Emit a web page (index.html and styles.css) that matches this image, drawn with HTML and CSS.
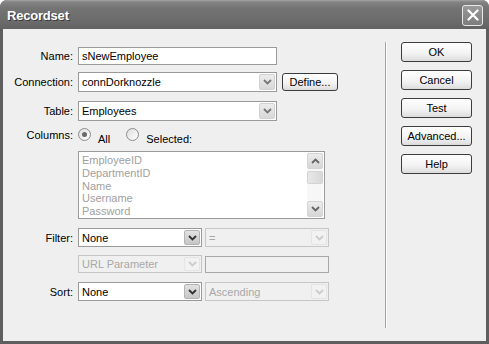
FILE: index.html
```html
<!DOCTYPE html>
<html lang="en">
<head>
    <meta charset="UTF-8">
    <title>Recordset</title>
    <link rel="stylesheet" href="styles.css">
</head>
<body>

    <div class="window">
        <div class="titlebar">
            <span class="title">Recordset</span>
            <div class="close-btn">
                <svg width="12" height="12" viewBox="0 0 12 12"><path d="M1.5 1.5 L10.5 10.5 M10.5 1.5 L1.5 10.5" stroke="#fff" stroke-width="2.2" stroke-linecap="round"/></svg>
            </div>
        </div>

        <div class="client">
            <div class="fields">
                <div class="row row-name">
                    <span class="label">Name:</span>
                    <div class="textbox w-wide">sNewEmployee</div>
                </div>

                <div class="row row-conn">
                    <span class="label">Connection:</span>
                    <div class="select w-wide"><span class="value">connDorknozzle</span><span class="arrow light"><svg width="9" height="6" viewBox="0 0 9 6"><path d="M1 1 L4.5 4.5 L8 1" fill="none" stroke="#777" stroke-width="1.8"/></svg></span></div>
                    <div class="btn btn-define">Define...</div>
                </div>

                <div class="row row-table">
                    <span class="label">Table:</span>
                    <div class="select w-wide"><span class="value">Employees</span><span class="arrow light"><svg width="9" height="6" viewBox="0 0 9 6"><path d="M1 1 L4.5 4.5 L8 1" fill="none" stroke="#777" stroke-width="1.8"/></svg></span></div>
                </div>

                <div class="row row-cols">
                    <span class="label">Columns:</span>
                    <div class="radios">
                        <span class="radio checked"></span><span class="radio-text">All</span>
                        <span class="radio second"></span><span class="radio-text">Selected:</span>
                    </div>
                </div>

                <div class="row row-list">
                    <span class="label"></span>
                    <div class="listbox">
                        <div class="items">
                            <div>EmployeeID</div>
                            <div>DepartmentID</div>
                            <div>Name</div>
                            <div>Username</div>
                            <div>Password</div>
                        </div>
                        <div class="scrollbar">
                            <span class="sb-btn"><svg width="9" height="6" viewBox="0 0 9 6"><path d="M1 5 L4.5 1.5 L8 5" fill="none" stroke="#666" stroke-width="1.8"/></svg></span>
                            <span class="sb-thumb"></span>
                            <span class="sb-track"></span>
                            <span class="sb-btn"><svg width="9" height="6" viewBox="0 0 9 6"><path d="M1 1 L4.5 4.5 L8 1" fill="none" stroke="#666" stroke-width="1.8"/></svg></span>
                        </div>
                    </div>
                </div>

                <div class="row row-filter">
                    <span class="label">Filter:</span>
                    <div class="select w-half"><span class="value">None</span><span class="arrow"><svg width="9" height="6" viewBox="0 0 9 6"><path d="M1 1 L4.5 4.5 L8 1" fill="none" stroke="#333" stroke-width="1.8"/></svg></span></div>
                    <div class="select w-half disabled"><span class="value">=</span><span class="arrow"><svg width="9" height="6" viewBox="0 0 9 6"><path d="M1 1 L4.5 4.5 L8 1" fill="none" stroke="#ccc" stroke-width="1.8"/></svg></span></div>
                </div>

                <div class="row row-url">
                    <span class="label"></span>
                    <div class="select w-half disabled"><span class="value">URL Parameter</span><span class="arrow"><svg width="9" height="6" viewBox="0 0 9 6"><path d="M1 1 L4.5 4.5 L8 1" fill="none" stroke="#ccc" stroke-width="1.8"/></svg></span></div>
                    <div class="textbox w-half disabled"></div>
                </div>

                <div class="row row-sort">
                    <span class="label">Sort:</span>
                    <div class="select w-half"><span class="value">None</span><span class="arrow"><svg width="9" height="6" viewBox="0 0 9 6"><path d="M1 1 L4.5 4.5 L8 1" fill="none" stroke="#333" stroke-width="1.8"/></svg></span></div>
                    <div class="select w-half disabled"><span class="value">Ascending</span><span class="arrow"><svg width="9" height="6" viewBox="0 0 9 6"><path d="M1 1 L4.5 4.5 L8 1" fill="none" stroke="#ccc" stroke-width="1.8"/></svg></span></div>
                </div>
            </div>

            <div class="divider"></div>

            <div class="actions">
                <div class="btn">OK</div>
                <div class="btn">Cancel</div>
                <div class="btn">Test</div>
                <div class="btn">Advanced...</div>
                <div class="btn">Help</div>
            </div>
        </div>
    </div>

</body>
</html>
```

FILE: styles.css
```css
body {
    margin: 0;
    background-color: #ffffff;
    font-family: "Liberation Sans", Arial, sans-serif;
    font-size: 11px;
    color: #000;
}
.window {
    width: 489px;
    height: 344px;
    box-sizing: border-box;
    background-color: #5e5e5e;
    border-radius: 7px 7px 0 0;
    padding: 0 3px 3px 3px;
    display: flex;
    flex-direction: column;
}
.titlebar {
    height: 29px;
    margin: 0 -3px;
    padding: 0 6px 0 7px;
    border-radius: 7px 7px 0 0;
    background: linear-gradient(#a4a4a4 0, #848484 2px, #747474 8px, #6c6c6c 20px, #626262 29px);
    display: flex;
    align-items: center;
    justify-content: space-between;
}
.title {
    color: #fff;
    font-weight: bold;
    font-size: 13px;
    letter-spacing: -0.2px;
    text-shadow: 1px 1px 0 #3a3a3a;
    margin-top: 1px;
}
.close-btn {
    width: 19px;
    height: 19px;
    border: 1px solid #e8e8e8;
    border-radius: 3px;
    background: linear-gradient(#9a9a9a, #7c7c7c);
    display: flex;
    align-items: center;
    justify-content: center;
    margin-top: 1px;
}
.client {
    flex: 1;
    background-color: #efefef;
    display: flex;
}
.fields {
    width: 382px;
    padding-top: 18px;
}
.row {
    display: flex;
    align-items: center;
}
.label {
    width: 70px;
    margin-right: 5px;
    text-align: right;
    flex: none;
}
.row-name { height: 18px; }
.row-conn { height: 20px; margin-top: 7px; }
.row-table { height: 20px; margin-top: 9px; }
.row-cols { height: 18px; margin-top: 8px; align-items: flex-start; }
.row-list { margin-top: 4px; align-items: flex-start; }
.row-filter { height: 19px; margin-top: 9px; }
.row-url { height: 18px; margin-top: 8px; }
.row-sort { height: 19px; margin-top: 9px; }

.w-wide { width: 199px; }
.w-half { width: 124px; margin-right: 3px; }

.textbox, .select {
    height: 100%;
    box-sizing: border-box;
    border: 1px solid #9a9a9a;
    background-color: #fff;
    display: flex;
    align-items: center;
    padding-left: 3px;
}
.select {
    padding-right: 1px;
    justify-content: space-between;
}
.value {
    white-space: nowrap;
}
.arrow {
    width: 16px;
    height: calc(100% - 2px);
    box-sizing: border-box;
    border: 1px solid #b4b4b4;
    border-radius: 2px;
    background: linear-gradient(#e2e2e2, #c6c6c6);
    display: flex;
    align-items: center;
    justify-content: center;
}
.arrow.light {
    border-color: #d2d2d2;
    background: linear-gradient(#ececec, #d8d8d8);
}
.disabled {
    background-color: #f0f0f0;
    border-color: #c6c6c6;
    color: #a8a8a8;
}
.disabled .arrow {
    border-color: #e4e4e4;
    background: #f2f2f2;
}
.row-url .textbox {
    height: 17px;
    border-color: #a8a8a8;
}

.btn {
    box-sizing: border-box;
    height: 20px;
    border: 1px solid #3c3c3c;
    border-radius: 3px;
    background: linear-gradient(#ffffff, #f2f2f2 60%, #dcdcdc);
    display: flex;
    align-items: center;
    justify-content: center;
}
.btn-define {
    width: 56px;
    height: 18px;
    margin-left: 5px;
}

.radios {
    display: flex;
    align-items: flex-start;
}
.radio {
    width: 13px;
    height: 13px;
    box-sizing: border-box;
    border: 1px solid #8c8c8c;
    border-radius: 50%;
    background: linear-gradient(135deg, #dedede, #ffffff);
    display: flex;
    align-items: center;
    justify-content: center;
    margin-top: -1px;
}
.radio.checked::after {
    content: "";
    width: 5px;
    height: 5px;
    border-radius: 50%;
    background-color: #6a6a6a;
}
.radio.second {
    margin-left: 16px;
}
.radio-text {
    margin-left: 7px;
    margin-top: 4px;
}

.listbox {
    width: 247px;
    height: 68px;
    box-sizing: border-box;
    border: 1px solid #9a9a9a;
    background-color: #fff;
    display: flex;
    justify-content: space-between;
    padding: 1px;
}
.items {
    color: #a0a0a0;
    line-height: 12.8px;
    padding: 1px 0 0 2px;
    overflow: hidden;
}
.scrollbar {
    width: 16px;
    display: flex;
    flex-direction: column;
    background-color: #f7f7f7;
}
.sb-btn {
    height: 16px;
    box-sizing: border-box;
    border: 1px solid #d4d4d4;
    border-radius: 2px;
    background: linear-gradient(#ececec, #d6d6d6);
    display: flex;
    align-items: center;
    justify-content: center;
    flex: none;
}
.sb-thumb {
    height: 13px;
    margin-top: 2px;
    box-sizing: border-box;
    border: 1px solid #d4d4d4;
    border-radius: 2px;
    background: linear-gradient(90deg, #e8e8e8, #d8d8d8);
}
.sb-track {
    flex: 1;
}

.divider {
    width: 1px;
    background-color: #a4a4a4;
    border-right: 1px solid #ffffff;
    margin: 13px 0 13px 0;
}
.actions {
    padding: 13px 0 0 14px;
    display: flex;
    flex-direction: column;
    gap: 8px;
}
.actions .btn {
    width: 71px;
}
```
